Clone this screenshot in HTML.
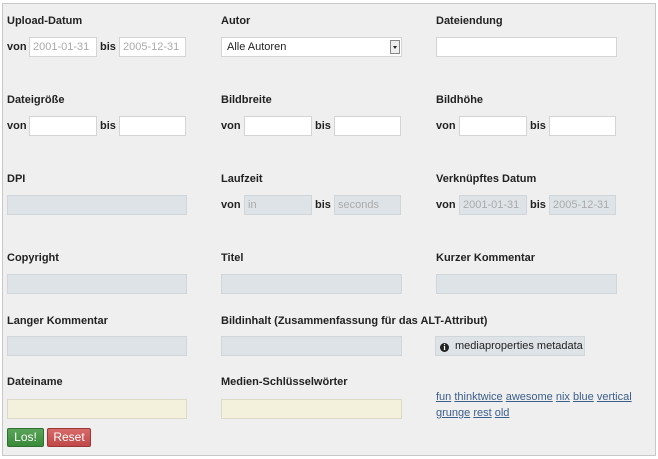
<!DOCTYPE html><html><head><style>
body{margin:0;width:658px;height:459px;background:#fff;font-family:"Liberation Sans",Arial,sans-serif;font-size:11px;color:#222}
#c{position:absolute;left:2px;top:3px;width:652px;height:451px;background:#efefef;border:1px solid #c8c8c8}
.a{position:absolute}
.l{position:absolute;font-weight:bold;font-size:11px;line-height:14px;white-space:nowrap}
.i{position:absolute;box-sizing:border-box;height:20px;background:#fff;border:1px solid #d4d4d4;font-size:11px;color:#aaa;line-height:18px;padding-left:3px;white-space:nowrap;overflow:hidden}
.d{background:#dde3e7;border-color:#d0d6da}
.y{background:#f3f1dc;border-color:#dcdac6}
.t{color:#3b5f8a;text-decoration:underline}
</style></head><body><div id="c"></div>
<div class="l" style="left:7px;top:14px">Upload-Datum</div>
<div class="l" style="left:7px;top:40px">von</div><div class="i" style="left:29px;top:37px;width:68px">2001-01-31</div>
<div class="l" style="left:100px;top:40px">bis</div><div class="i" style="left:119px;top:37px;width:67px">2005-12-31</div>
<div class="l" style="left:221px;top:14px">Autor</div>
<div class="i" style="left:221px;top:37px;width:181px;color:#222;padding-left:5px">Alle Autoren<div class="a" style="right:1px;top:2px;width:10px;height:14px;border:1px solid #888;background:#eee;box-sizing:border-box"><div class="a" style="left:2px;top:5px;border-left:2px solid transparent;border-right:2px solid transparent;border-top:3px solid #222"></div></div></div>
<div class="l" style="left:436px;top:14px">Dateiendung</div>
<div class="i" style="left:436px;top:37px;width:181px"></div>
<div class="l" style="left:7px;top:93px">Dateigröße</div>
<div class="l" style="left:7px;top:119px">von</div><div class="i" style="left:29px;top:116px;width:68px"></div>
<div class="l" style="left:100px;top:119px">bis</div><div class="i" style="left:119px;top:116px;width:67px"></div>
<div class="l" style="left:221px;top:93px">Bildbreite</div>
<div class="l" style="left:221px;top:119px">von</div><div class="i" style="left:244px;top:116px;width:68px"></div>
<div class="l" style="left:315px;top:119px">bis</div><div class="i" style="left:334px;top:116px;width:67px"></div>
<div class="l" style="left:436px;top:93px">Bildhöhe</div>
<div class="l" style="left:436px;top:119px">von</div><div class="i" style="left:459px;top:116px;width:68px"></div>
<div class="l" style="left:530px;top:119px">bis</div><div class="i" style="left:549px;top:116px;width:67px"></div>
<div class="l" style="left:7px;top:172px">DPI</div>
<div class="i d" style="left:7px;top:195px;width:180px"></div>
<div class="l" style="left:221px;top:172px">Laufzeit</div>
<div class="l" style="left:221px;top:198px">von</div><div class="i d" style="left:244px;top:195px;width:68px">in</div>
<div class="l" style="left:315px;top:198px">bis</div><div class="i d" style="left:334px;top:195px;width:67px">seconds</div>
<div class="l" style="left:436px;top:172px">Verknüpftes Datum</div>
<div class="l" style="left:436px;top:198px">von</div><div class="i d" style="left:459px;top:195px;width:68px">2001-01-31</div>
<div class="l" style="left:530px;top:198px">bis</div><div class="i d" style="left:549px;top:195px;width:67px">2005-12-31</div>
<div class="l" style="left:7px;top:251px">Copyright</div><div class="i d" style="left:7px;top:274px;width:180px"></div>
<div class="l" style="left:221px;top:251px">Titel</div><div class="i d" style="left:221px;top:274px;width:181px"></div>
<div class="l" style="left:436px;top:251px">Kurzer Kommentar</div><div class="i d" style="left:436px;top:274px;width:181px"></div>
<div class="l" style="left:7px;top:314px">Langer Kommentar</div><div class="i d" style="left:7px;top:336px;width:180px"></div>
<div class="l" style="left:221px;top:314px">Bildinhalt (Zusammenfassung für das ALT-Attribut)</div><div class="i d" style="left:221px;top:336px;width:181px"></div>
<div class="a" style="left:435px;top:336px;width:150px;height:20px;box-sizing:border-box;background:#dde3e7;border:1px solid #d0d6da;line-height:18px;color:#222;font-size:11px;white-space:nowrap"><span style="display:inline-block;width:9px;height:9px;border-radius:50%;background:#222;color:#fff;font-size:8px;font-weight:bold;line-height:9px;text-align:center;margin:0 6px 0 4px;vertical-align:-1px;font-family:'Liberation Serif',serif">i</span>mediaproperties metadata</div>
<div class="l" style="left:7px;top:375px">Dateiname</div><div class="i y" style="left:7px;top:399px;width:180px"></div>
<div class="l" style="left:221px;top:375px">Medien-Schlüsselwörter</div><div class="i y" style="left:221px;top:399px;width:181px"></div>
<div class="a" style="left:436px;top:389px;width:210px;line-height:16px;font-size:11px"><span class="t">fun</span> <span class="t">thinktwice</span> <span class="t">awesome</span> <span class="t">nix</span> <span class="t">blue</span> <span class="t">vertical</span><br><span class="t">grunge</span> <span class="t">rest</span> <span class="t">old</span></div>
<div class="a" style="left:7px;top:428px;width:37px;height:19px;box-sizing:border-box;background:linear-gradient(#5aa55a,#3a8a3a);border:1px solid #2f6f2f;border-radius:2px;color:#fff;text-align:center;line-height:17px;font-size:12px">Los!</div>
<div class="a" style="left:47px;top:428px;width:44px;height:19px;box-sizing:border-box;background:linear-gradient(#d86a6a,#c04848);border:1px solid #9a3838;border-radius:2px;color:#fff;text-align:center;line-height:17px;font-size:12px">Reset</div>
</body></html>
